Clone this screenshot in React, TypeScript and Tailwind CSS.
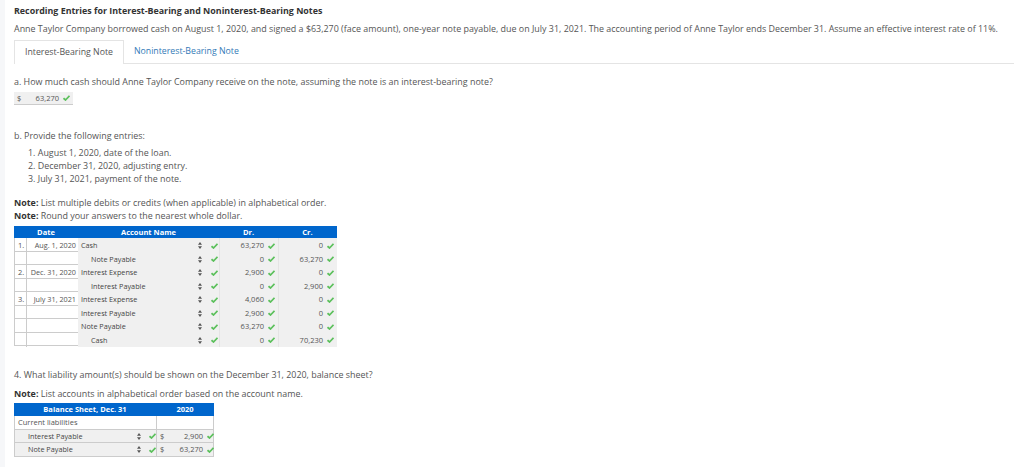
const entries = [
  { no: '1.', date: 'Aug. 1, 2020', account: 'Cash', indent: false, dr: '63,270', cr: '0' },
  { no: '', date: '', account: 'Note Payable', indent: true, dr: '0', cr: '63,270' },
  { no: '2.', date: 'Dec. 31, 2020', account: 'Interest Expense', indent: false, dr: '2,900', cr: '0' },
  { no: '', date: '', account: 'Interest Payable', indent: true, dr: '0', cr: '2,900' },
  { no: '3.', date: 'July 31, 2021', account: 'Interest Expense', indent: false, dr: '4,060', cr: '0' },
  { no: '', date: '', account: 'Interest Payable', indent: false, dr: '2,900', cr: '0' },
  { no: '', date: '', account: 'Note Payable', indent: false, dr: '63,270', cr: '0' },
  { no: '', date: '', account: 'Cash', indent: true, dr: '0', cr: '70,230' },
];

function Check() {
  return (
    <svg width="7" height="6" viewBox="0 0 7 6" className="shrink-0">
      <path d="M0.5 3.2 L2.5 5 L6.5 0.8" fill="none" stroke="#5cc05c" strokeWidth="1.7" />
    </svg>
  );
}

function Arrows() {
  return (
    <svg width="4" height="7" viewBox="0 0 4 7" className="shrink-0">
      <path d="M2 0 L4 2.8 L0 2.8 Z M2 7 L4 4.2 L0 4.2 Z" fill="#555" />
    </svg>
  );
}

function Amount({ value }: { value: string }) {
  return (
    <div className="flex items-center justify-end gap-[4px] pr-[3px] pt-[1px] bg-[#f0f0f0] h-full">
      <span>{value}</span>
      <Check />
    </div>
  );
}

export default function App() {
  return (
    <div
      className="h-[467px] w-[1024px] overflow-hidden bg-white border-l-[5px] border-[#f6f7f9] pl-[9px] text-[8.92px] text-[#555] leading-[13px]"
      style={{ fontFamily: '"Open Sans", sans-serif' }}
    >
      <h1 className="pt-[4px] font-bold text-[#333] text-[8.9px]">
        Recording Entries for Interest-Bearing and Noninterest-Bearing Notes
      </h1>
      <p className="mt-[5px] whitespace-nowrap">
        Anne Taylor Company borrowed cash on August 1, 2020, and signed a $63,270 (face amount), one-year note payable, due on July 31, 2021. The accounting period of Anne Taylor ends December 31. Assume an effective interest rate of 11%.
      </p>

      {/* tabs */}
      <div className="mt-[5px] flex h-[24px] w-[1000px] border-b border-[#e4e4e4] text-[8.75px]">
        <div className="flex h-[24px] items-center border-l border-r border-t border-[#e4e4e4] bg-white px-[10px]">
          Interest-Bearing Note
        </div>
        <div className="flex items-center px-[10px] text-[#337ab7]">Noninterest-Bearing Note</div>
      </div>

      <p className="mt-[11px]">a. How much cash should Anne Taylor Company receive on the note, assuming the note is an interest-bearing note?</p>
      <div className="mt-[4px] flex h-[13px] w-[59px] items-center justify-between bg-[#f0f0f0] border-b border-[#ccc] px-[3px] text-[7.5px]">
        <span>$</span>
        <span className="flex items-center gap-[4px]">
          63,270 <Check />
        </span>
      </div>

      <p className="mt-[24px]">b. Provide the following entries:</p>
      <ol className="mt-[4px] pl-[14px]">
        <li>1. August 1, 2020, date of the loan.</li>
        <li>2. December 31, 2020, adjusting entry.</li>
        <li>3. July 31, 2021, payment of the note.</li>
      </ol>

      <p className="mt-[11px]">
        <b className="text-[#333]">Note:</b> List multiple debits or credits (when applicable) in alphabetical order.
      </p>
      <p>
        <b className="text-[#333]">Note:</b> Round your answers to the nearest whole dollar.
      </p>

      {/* journal table */}
      <div className="mt-[4px] w-[323px] text-[7.5px] leading-[13px]">
        <div className="grid h-[12px] grid-cols-[64px_141px_59px_59px] bg-[#0066cc] text-center font-bold text-white">
          <div>Date</div>
          <div>Account Name</div>
          <div>Dr.</div>
          <div>Cr.</div>
        </div>
        {entries.map((row, i) => (
          <div key={i} className="grid h-[13.5px] grid-cols-[12px_51px_141px_59px_59px] border-b border-[#ccc] border-l border-r">
            <div className="border-r border-[#ccc] pl-[3px] pt-[1px]">{row.no}</div>
            <div className="whitespace-nowrap pr-[2px] pt-[1px] text-right text-[7.25px]">{row.date}</div>
            <div className={`flex items-center justify-between bg-[#f0f0f0] pr-[1px] pt-[1px] text-[7.25px] text-[#444] ${row.indent ? 'pl-[13px]' : 'pl-[3px]'}`}>
              <span>{row.account}</span>
              <span className="flex items-center gap-[9px]">
                <Arrows />
                <Check />
              </span>
            </div>
            <div className="border-l border-[#e4e4e4]">
              <Amount value={row.dr} />
            </div>
            <div className="border-l border-[#e4e4e4]">
              <Amount value={row.cr} />
            </div>
          </div>
        ))}
      </div>

      <p className="mt-[22px]">4. What liability amount(s) should be shown on the December 31, 2020, balance sheet?</p>
      <p className="mt-[6px]">
        <b className="text-[#333]">Note:</b> List accounts in alphabetical order based on the account name.
      </p>

      {/* balance sheet table */}
      <div className="mt-[3px] w-[200px] text-[7.5px] leading-[13px]">
        <div className="grid h-[13px] grid-cols-[142px_58px] bg-[#0066cc] text-center font-bold text-white">
          <div>Balance Sheet, Dec. 31</div>
          <div>2020</div>
        </div>
        <div className="grid h-[13.5px] grid-cols-[142px_58px] border-b border-l border-r border-[#ccc]">
          <div className="border-r border-[#ccc] pl-[3px]">Current liabilities</div>
          <div />
        </div>
        {[
          { name: 'Interest Payable', value: '2,900' },
          { name: 'Note Payable', value: '63,270' },
        ].map((row) => (
          <div key={row.name} className="grid h-[13.5px] grid-cols-[142px_58px] border-b border-l border-r border-[#ccc] bg-[#f0f0f0]">
            <div className="flex items-center justify-between border-r border-[#ccc] pl-[13px] text-[7.25px] text-[#444]">
              <span>{row.name}</span>
              <span className="flex items-center gap-[8px]">
                <Arrows />
                <Check />
              </span>
            </div>
            <div className="flex items-center justify-between pl-[3px] pr-[1px]">
              <span>$</span>
              <span className="flex items-center gap-[4px]">
                {row.value} <Check />
              </span>
            </div>
          </div>
        ))}
      </div>
    </div>
  );
}
